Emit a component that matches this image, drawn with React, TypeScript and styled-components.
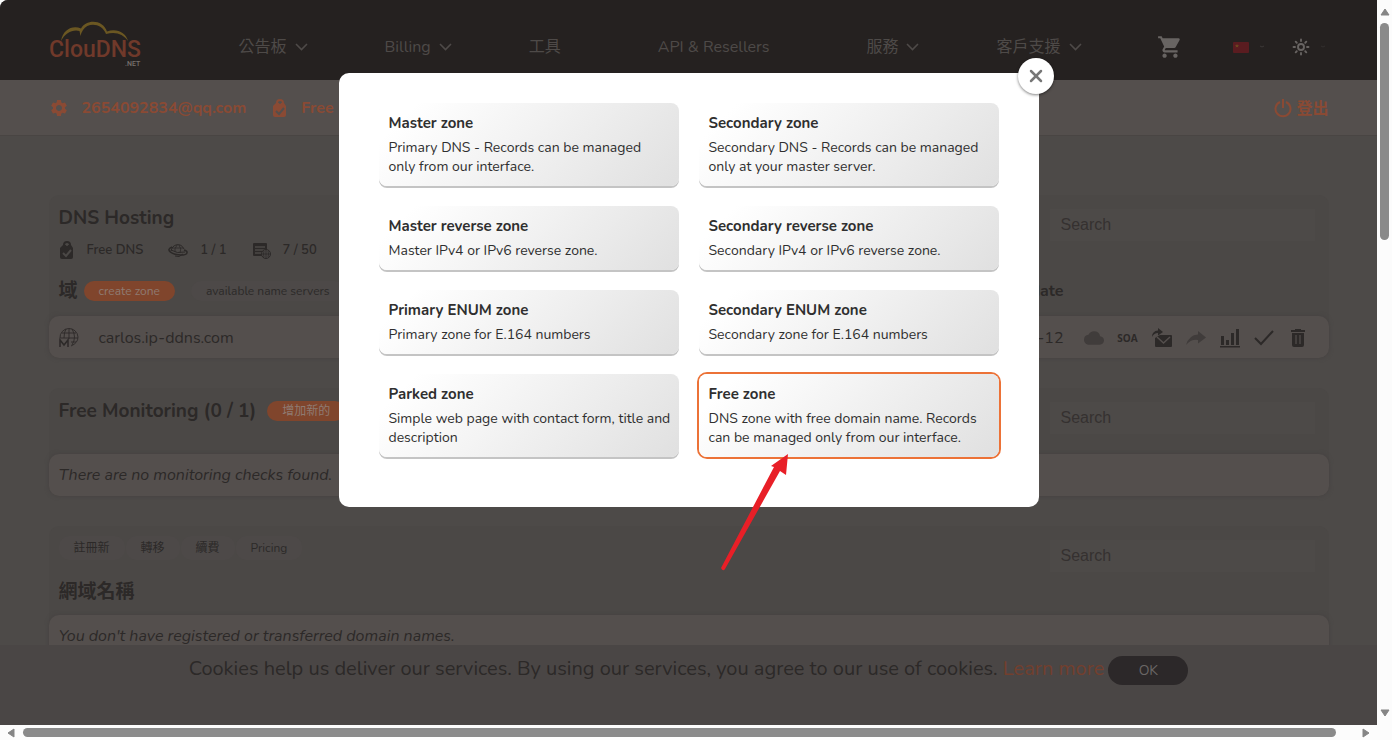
import React from "react";
import styled, { createGlobalStyle } from "styled-components";
import { MdSettings, MdShoppingCart, MdCloud } from "react-icons/md";
import { Sun, X } from "lucide-react";

const FONT = `Nunito, Lato, "Noto Sans CJK TC", sans-serif`;

const color = {
  header: "#252120",
  bar: "#544f4d",
  page: "#4d4a48",
  panel: "#4b4846",
  field: "#4d4a48",
  navText: "#4e4a48",
  ink: "#2c2928",
  soft: "#353130",
  orange: "#8a4a34",
  orangeFill: "#80452c",
};

const GlobalStyle = createGlobalStyle`
  * { box-sizing: border-box; }
  body { margin: 0; background: #fcfcfc; font-family: ${FONT}; color: ${color.ink}; }
  button, input { font-family: inherit; border: 0; margin: 0; padding: 0; }
  button { cursor: pointer; }
  a { color: inherit; text-decoration: none; }
  h2, h3, p, ul { margin: 0; padding: 0; }
  ul { list-style: none; }
  svg { display: block; flex: none; }
`;

const Frame = styled.div`
  display: grid;
  grid-template-columns: 1fr 15px;
  grid-template-rows: 1fr 15px;
  height: 100vh;
  background: #fcfcfc;
`;

const Page = styled.div`
  position: relative;
  overflow: hidden;
  background: ${color.page};
  border-top-left-radius: 8px;
`;

const Container = styled.div`
  max-width: 1280px;
  margin: 0 auto;
`;

const Header = styled.header`
  background: ${color.header};
`;

const HeaderInner = styled(Container)`
  display: flex;
  align-items: center;
  height: 80px;
  padding-top: 14px;
`;

const LogoLink = styled.a`
  margin-right: 98px;
`;

const Nav = styled.nav`
  display: flex;
  align-items: center;
  gap: 77px;
`;

const NavLink = styled.a<{ $plain?: boolean }>`
  display: flex;
  align-items: center;
  gap: 8px;
  padding-right: ${(p) => (p.$plain ? 20 : 0)}px;
  font-size: 16px;
  line-height: 22px;
  white-space: nowrap;
  color: ${color.navText};
`;

const Tools = styled.div`
  display: flex;
  align-items: center;
  margin-left: auto;
  color: ${color.navText};
`;

const ToolButton = styled.button<{ $space: number }>`
  display: flex;
  align-items: center;
  gap: 10px;
  margin-right: ${(p) => p.$space}px;
  background: none;
  color: inherit;
`;

const AccountBar = styled.div`
  background: ${color.bar};
  border-bottom: 1px solid #494543;
`;

const AccountInner = styled(Container)`
  display: flex;
  align-items: center;
  height: 55px;
  color: ${color.orange};
  font-size: 16px;
  font-weight: 700;
`;

const AccountLink = styled.a`
  display: flex;
  align-items: center;
  gap: 13px;
  margin-right: 26px;
`;

const LogoutLink = styled.a`
  display: flex;
  align-items: center;
  gap: 4px;
  margin-left: auto;
`;

const Main = styled.main`
  padding-top: 59px;
`;

const Panel = styled.section`
  margin-bottom: 30px;
  background: ${color.panel};
  border-radius: 10px;
`;

const PanelHead = styled.div<{ $bottom: number }>`
  padding: 10px 0 ${(p) => p.$bottom}px 10px;
`;

const PanelTop = styled.div`
  display: flex;
  justify-content: space-between;
  align-items: flex-start;
  padding-right: 14px;
`;

const Heading = styled.h2`
  font-size: 19px;
  line-height: 26px;
  font-weight: 700;
`;

const HeadingRow = styled.div`
  display: flex;
  align-items: center;
  gap: 11px;
`;

const Meta = styled.ul`
  display: flex;
  gap: 25px;
  margin-top: 9px;
`;

const MetaItem = styled.li`
  display: flex;
  align-items: center;
  gap: 12px;
  height: 20px;
  font-size: 13px;
  font-weight: 600;
`;

const SearchInput = styled.input`
  width: 265px;
  height: 32px;
  margin-top: 4px;
  padding: 0 11px;
  background: ${color.field};
  font-family: "Liberation Sans", Arial, sans-serif;
  font-size: 16px;
  &::placeholder { color: ${color.soft}; opacity: 1; }
`;

const Pill = styled.button<{ $tone?: "accent" }>`
  height: 20px;
  padding: 0 15px;
  border-radius: 10px;
  font-size: 12px;
  line-height: 20px;
  white-space: nowrap;
  background: ${(p) => (p.$tone ? color.orangeFill : "#4d4948")};
  color: ${(p) => (p.$tone ? "#8f7b72" : color.ink)};
`;

const ZoneGrid = styled.div`
  display: grid;
  grid-template-columns: 1fr auto 265px;
  align-items: center;
`;

const ZoneHeader = styled(ZoneGrid)`
  height: 24px;
  margin-top: 18px;
`;

const ZoneRow = styled(ZoneGrid)`
  min-height: 44px;
`;

const ZoneActions = styled.div`
  display: flex;
  align-items: center;
  gap: 16px;
`;

const ZoneLabel = styled(HeadingRow)`
  gap: 6px;
`;

const ColumnTitle = styled.span`
  font-size: 16px;
  line-height: 20px;
  font-weight: 700;
`;

const PanelBody = styled.div`
  padding-left: 10px;
  height: 42px;
  background: ${color.bar};
  border-radius: 10px;
  box-shadow: 0 0 4px #454140;
  font-size: 16px;
  line-height: 42px;
`;

const ZoneLink = styled.a`
  display: flex;
  align-items: center;
  gap: 20px;
`;

const Actions = styled.div`
  display: flex;
  align-items: center;
  gap: 14px;
  padding-left: 20px;
`;

const ActionButton = styled.button<{ $muted?: boolean }>`
  display: flex;
  justify-content: center;
  width: 20px;
  background: none;
  color: ${(p) => (p.$muted ? "#403c3b" : color.ink)};
  font-family: "Open Sans", sans-serif;
  font-size: 10px;
  font-weight: 700;
  line-height: 20px;
`;

const EmptyNote = styled.p`
  font-style: italic;
`;

const Tabs = styled.div`
  display: flex;
  gap: 1px;
  margin-bottom: 19px;
`;

const Tab = styled(Pill)`
  height: 24px;
`;

const CookieBar = styled.div`
  position: absolute;
  inset: auto 0 0 0;
  display: flex;
  justify-content: center;
  align-items: flex-start;
  gap: 4px;
  height: 80px;
  padding-top: 10px;
  background: #4a4645;
  font-size: 20px;
  line-height: 28px;
`;

const CookieLink = styled.a`
  color: #733f2e;
`;

const OkButton = styled.button`
  width: 80px;
  height: 29px;
  margin-top: 1px;
  border-radius: 15px;
  background: #2c2829;
  color: #6a6665;
  font-size: 14px;
`;

const Modal = styled.div`
  position: absolute;
  top: 73px;
  left: 50%;
  width: 700px;
  margin-left: -350px;
  padding: 30px 40px 50px;
  background: #fff;
  border-radius: 10px;
`;

const CloseButton = styled.button`
  position: absolute;
  top: -15px;
  right: -15px;
  display: flex;
  align-items: center;
  justify-content: center;
  width: 36px;
  height: 36px;
  border-radius: 50%;
  background: #fff;
  color: #777;
  box-shadow: 0 1px 3px rgba(0, 0, 0, 0.5);
`;

const CardGrid = styled.div`
  display: grid;
  grid-template-columns: 1fr 1fr;
  gap: 20px;
`;

const Card = styled.button<{ $active?: boolean }>`
  display: flex;
  flex-direction: column;
  gap: 5px;
  padding: 10px 8px 10px 10px;
  border-radius: 8px;
  text-align: left;
  background: linear-gradient(135deg, #fff 10%, #e0e0e0 100%);
  box-shadow: ${(p) => (p.$active ? "0 0 0 2px #ec7237" : "0 2px 0 #c4c4c4")};
  color: #2f2f2f;
`;

const CardTitle = styled.span`
  font-size: 15px;
  line-height: 20px;
  font-weight: 700;
`;

const CardText = styled.span`
  font-size: 14px;
  line-height: 19px;
`;

const Arrow = styled.svg`
  position: absolute;
  left: 380px;
  top: 379px;
`;

const ScrollTrack = styled.div<{ $vertical?: boolean }>`
  display: flex;
  flex-direction: ${(p) => (p.$vertical ? "column" : "row")};
  align-items: center;
  justify-content: space-between;
  padding: ${(p) => (p.$vertical ? "7px 0" : "0 6px")};
  color: #858585;
`;

const ScrollSpace = styled.div<{ $vertical?: boolean }>`
  display: flex;
  flex-direction: ${(p) => (p.$vertical ? "column" : "row")};
  flex: 1;
  margin: ${(p) => (p.$vertical ? "6px 0" : "0 7px")};
`;

const ScrollThumb = styled.div<{ $vertical?: boolean }>`
  flex: 0 0 ${(p) => (p.$vertical ? "32%" : "calc(100% - 18px)")};
  width: ${(p) => (p.$vertical ? "9px" : "auto")};
  height: ${(p) => (p.$vertical ? "auto" : "9px")};
  border-radius: 5px;
  background: #8a8a8a;
`;

const Chevron = () => (
  <svg width="13" height="8" viewBox="0 0 13 8" fill="none" stroke="currentColor" strokeWidth="1.600">
    <path d="M1 1l5.500 5.500L12 1" />
  </svg>
);

const Dash = ({ tint }: { tint: string }) => (
  <svg width="6" height="6" viewBox="0 0 6 6" fill="none" stroke={tint}>
    <path d="M1 2l2 1 2-1" />
  </svg>
);

const Logo = () => (
  <svg width="92" height="52" viewBox="0 0 92 52" role="img" aria-label="ClouDNS.net">
    <path
      d="M12 20C14 8 24 4 32 7.500C37-2 54-2 58 10.500C68 7 77 12 79 20C74 13 67 10.500 57 13C53 2 39 1 34 9Q32 12 31.500 15L30.500 10C24 8 16 12 12 20Z"
      fill="#6b5722"
    />
    <text x="0" y="36" fontFamily="Roboto, sans-serif" fontSize="23" fontWeight="500" fill="#70392a">
      ClouDNS
    </text>
    <text x="76" y="45" fontFamily="Roboto, sans-serif" fontSize="7" fontWeight="500" fill="#77706d">
      .NET
    </text>
  </svg>
);

const Bag = ({ hole }: { hole: string }) => (
  <svg width="16" height="20" viewBox="0 0 16 20">
    <path d="M5 6V5a3 3 0 0 1 6 0v1" fill="none" stroke="currentColor" strokeWidth="2" />
    <path d="M4 5h8l2 3v9q0 2-2 2H3q-2 0-2-2V8z" fill="currentColor" />
    <circle cx="8" cy="5" r="1" fill={hole} />
    <path d="M4 13l3 3 5-6" fill="none" stroke={hole} strokeWidth="2" />
  </svg>
);

const Power = () => (
  <svg width="18" height="20" viewBox="0 0 18 20" fill="none" stroke="currentColor" strokeWidth="2">
    <path d="M6 4A7.500 7.500 0 1 0 12 4M9 1v9" />
  </svg>
);

const Planet = () => (
  <svg width="20" height="16" viewBox="0 0 20 16" fill="none" stroke="currentColor">
    <path d="M3 9C4 2 13 0 16 7M7 14q4 2 8-2" />
    <path d="M9 3Q6 7 7 10M11 3q3 4 1 8M4 6h11" strokeWidth=".8" />
    <path d="M4 5C-4 8 5 13 13 13C21 13 20 9 16 8" strokeWidth="1.500" />
    <path d="M3 8q6 4 14 2" />
  </svg>
);

const Records = () => (
  <svg width="19" height="17" viewBox="0 0 19 17">
    <path d="M2 1h12q1 0 1 1v12H2q-1 0-1-1V2q0-1 1-1z" fill="currentColor" />
    <path d="M3 5h10M3 8h10M3 11h8" stroke={color.panel} strokeWidth="1.500" />
    <circle cx="14" cy="12" r="4.500" fill={color.panel} stroke="currentColor" />
    <path d="M10 12h8M14 8v8M12 9q-1 3 0 6M16 9q1 3 0 6" fill="none" stroke="currentColor" strokeWidth=".8" />
  </svg>
);

const MasterGlobe = () => (
  <svg width="20" height="20" viewBox="0 0 20 20" fill="none" stroke="currentColor" strokeWidth=".9">
    <path d="M1 10A9 9 0 0 1 19 9Q19 15 12 18M10 0v11M3 5h14M1 10h18M12 14h5M7 1Q5 4 5 10M13 1q5 8 0 16" />
    <path d="M1 19v-7l4 5 4-5v7" strokeWidth="1.500" />
  </svg>
);

const MailForward = () => (
  <svg width="20" height="20" viewBox="0 0 20 20">
    <path d="M8 7h11q1 0 1 1v10q0 1-1 1H4q-1 0-1-1v-8z" fill="currentColor" />
    <path d="M5 9l6.500 6L18 9" fill="none" stroke={color.bar} strokeWidth="1.500" />
    <path d="M0 9Q0 3 6 2.500V0l5 4-5 3.500V5Q2 5 0 9z" fill="currentColor" />
  </svg>
);

const Forward = () => (
  <svg width="20" height="16" viewBox="0 0 20 16" fill="currentColor">
    <path d="M0 15Q3 5 12 4.500V1l8 6.500-8 6V10Q5 9 0 15z" />
  </svg>
);

const Chart = () => (
  <svg width="20" height="20" viewBox="0 0 20 20" fill="currentColor">
    <path d="M1 8h3v9H1zM6 12h3v5H6zM11 5h3v12h-3zM16 1h3v16h-3zM0 18h20v1.500H0z" />
  </svg>
);

const CheckMark = () => (
  <svg width="20" height="16" viewBox="0 0 20 16" fill="none" stroke="currentColor" strokeWidth="2">
    <path d="M1 8l6 6L19 1" />
  </svg>
);

const Trash = () => (
  <svg width="14" height="18" viewBox="0 0 14 18">
    <path d="M0 1h4V0h6v1h4v2H0zM1 4h12v12q0 2-2 2H3q-2 0-2-2z" fill="currentColor" />
    <path d="M5 6v9M9 6v9" stroke={color.bar} strokeWidth="1.200" />
  </svg>
);

const Flag = () => (
  <svg width="16" height="11" viewBox="0 0 16 11">
    <rect width="16" height="11" rx="1" fill="#5a1c20" />
    <path d="M4 2l.6 1.300H6L5 4.200l.4 1.300L4 4.700l-1.400.8L3 4.200 2 3.300h1.400z" fill="#6b4c20" />
  </svg>
);

const ScrollArrow = ({ d }: { d: string }) => (
  <svg width="10" height="10" viewBox="0 0 10 10" fill="currentColor">
    <path d={d} stroke="currentColor" strokeLinejoin="round" />
  </svg>
);

const navItems = [
  { label: "公告板", menu: true },
  { label: "Billing", menu: true },
  { label: "工具", menu: false },
  { label: "API & Resellers", menu: false },
  { label: "服務", menu: true },
  { label: "客戶支援", menu: true },
];

const zoneTypes = [
  ["Master zone", "Primary DNS - Records can be managed only from our interface."],
  ["Secondary zone", "Secondary DNS - Records can be managed only at your master server."],
  ["Master reverse zone", "Master IPv4 or IPv6 reverse zone."],
  ["Secondary reverse zone", "Secondary IPv4 or IPv6 reverse zone."],
  ["Primary ENUM zone", "Primary zone for E.164 numbers"],
  ["Secondary ENUM zone", "Secondary zone for E.164 numbers"],
  ["Parked zone", "Simple web page with contact form, title and description"],
  ["Free zone", "DNS zone with free domain name. Records can be managed only from our interface."],
];

const Search = () => <SearchInput type="search" placeholder="Search" aria-label="Search" />;

export default function App() {
  return (
    <Frame>
      <GlobalStyle />
      <Page>
        <Header>
          <HeaderInner>
            <LogoLink href="#"><Logo /></LogoLink>
            <Nav>
              {navItems.map((item) => (
                <NavLink key={item.label} href="#" $plain={!item.menu}>
                  {item.label}
                  {item.menu && <Chevron />}
                </NavLink>
              ))}
            </Nav>
            <Tools>
              <ToolButton $space={50} aria-label="Cart"><MdShoppingCart size={26} color="#686462" /></ToolButton>
              <ToolButton $space={27} aria-label="Language"><Flag /><Dash tint="#3c3837" /></ToolButton>
              <ToolButton $space={3} aria-label="Theme"><Sun size={18} color="#686462" strokeWidth={2.5} /><Dash tint="#332f2e" /></ToolButton>
            </Tools>
          </HeaderInner>
        </Header>
        <AccountBar>
          <AccountInner>
            <AccountLink href="#"><MdSettings size={20} />2654092834@qq.com</AccountLink>
            <AccountLink href="#"><Bag hole={color.bar} />Free</AccountLink>
            <LogoutLink href="#"><Power />登出</LogoutLink>
          </AccountInner>
        </AccountBar>
        <Main>
          <Container>
            <Panel>
              <PanelHead $bottom={14}>
                <PanelTop>
                  <div>
                    <Heading>DNS Hosting</Heading>
                    <Meta>
                      <MetaItem><Bag hole={color.panel} />Free DNS</MetaItem>
                      <MetaItem><Planet />1 / 1</MetaItem>
                      <MetaItem><Records />7 / 50</MetaItem>
                    </Meta>
                  </div>
                  <Search />
                </PanelTop>
                <ZoneHeader>
                  <ZoneActions>
                    <ZoneLabel>
                      <Heading>域</Heading>
                      <Pill $tone="accent">create zone</Pill>
                    </ZoneLabel>
                    <Pill>available name servers</Pill>
                  </ZoneActions>
                  <ColumnTitle>date</ColumnTitle>
                </ZoneHeader>
              </PanelHead>
              <PanelBody>
                <ZoneRow>
                  <ZoneLink href="#"><MasterGlobe />carlos.ip-ddns.com</ZoneLink>
                  <span>-12</span>
                  <Actions>
                    <ActionButton $muted aria-label="Cloud"><MdCloud size={20} /></ActionButton>
                    <ActionButton>SOA</ActionButton>
                    <ActionButton aria-label="Mail forwards"><MailForward /></ActionButton>
                    <ActionButton $muted aria-label="Share"><Forward /></ActionButton>
                    <ActionButton aria-label="Statistics"><Chart /></ActionButton>
                    <ActionButton aria-label="Status"><CheckMark /></ActionButton>
                    <ActionButton aria-label="Delete"><Trash /></ActionButton>
                  </Actions>
                </ZoneRow>
              </PanelBody>
            </Panel>
            <Panel>
              <PanelHead $bottom={20}>
                <PanelTop>
                  <HeadingRow>
                    <Heading>Free Monitoring (0 / 1)</Heading>
                    <Pill $tone="accent">增加新的</Pill>
                  </HeadingRow>
                  <Search />
                </PanelTop>
              </PanelHead>
              <PanelBody><EmptyNote>There are no monitoring checks found.</EmptyNote></PanelBody>
            </Panel>
            <Panel>
              <PanelHead $bottom={10}>
                <PanelTop>
                  <div>
                    <Tabs>
                      <Tab>註冊新</Tab>
                      <Tab>轉移</Tab>
                      <Tab>續費</Tab>
                      <Tab>Pricing</Tab>
                    </Tabs>
                    <Heading>網域名稱</Heading>
                  </div>
                  <Search />
                </PanelTop>
              </PanelHead>
              <PanelBody><EmptyNote>You don't have registered or transferred domain names.</EmptyNote></PanelBody>
            </Panel>
          </Container>
        </Main>
        <CookieBar>
          <p>
            Cookies help us deliver our services. By using our services, you agree to our use of cookies.{" "}
            <CookieLink href="#">Learn more</CookieLink>
          </p>
          <OkButton>OK</OkButton>
        </CookieBar>
        <Modal role="dialog" aria-label="Create zone">
          <CloseButton aria-label="Close"><X size={20} strokeWidth={3} /></CloseButton>
          <CardGrid>
            {zoneTypes.map(([title, text]) => (
              <Card key={title} $active={title === "Free zone"}>
                <CardTitle>{title}</CardTitle>
                <CardText>{text}</CardText>
              </Card>
            ))}
          </CardGrid>
          <Arrow width="72" height="122" viewBox="0 0 72 122" fill="#e81f27">
            <path d="M69 2L67 23L61 19L6 117Q4 120 2 116L55 15L52 14Z" />
          </Arrow>
        </Modal>
      </Page>
      <ScrollTrack $vertical>
        <ScrollArrow d="M5 2l4 6H1z" />
        <ScrollSpace $vertical><ScrollThumb $vertical /></ScrollSpace>
        <ScrollArrow d="M5 8l4-6H1z" />
      </ScrollTrack>
      <ScrollTrack>
        <ScrollArrow d="M2 5l6-4v8z" />
        <ScrollSpace><ScrollThumb /></ScrollSpace>
        <ScrollArrow d="M8 5L2 1v8z" />
      </ScrollTrack>
    </Frame>
  );
}
